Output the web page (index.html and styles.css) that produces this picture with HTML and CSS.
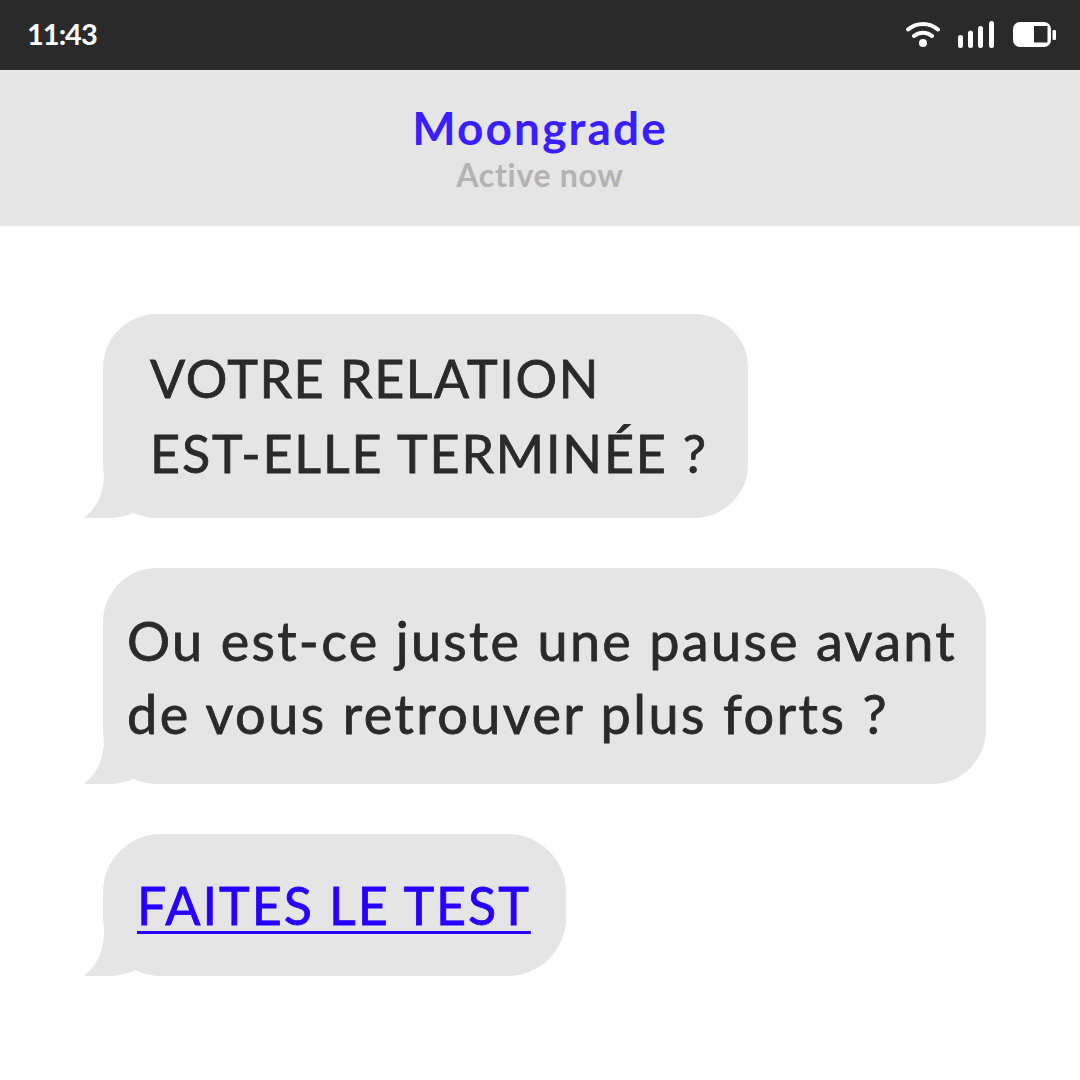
FILE: index.html
```html
<!DOCTYPE html>
<html lang="fr">
<head>
<meta charset="utf-8">
<title>Moongrade</title>
<link rel="stylesheet" href="styles.css">
</head>
<body>
<div class="status">
  <span class="time">11:43</span>
  <div class="icons">
    <svg class="wifi" width="34" height="26" viewBox="0 0 34 26"><path d="M2 8.500C10.500 1 23.500 1 32 8.500M8 15C13 10.500 21 10.500 26 15" fill="none" stroke="#fff" stroke-width="4" stroke-linecap="round"/><circle cx="17" cy="22" r="4" fill="#fff"/></svg>
    <svg class="signal" width="36" height="27" viewBox="0 0 36 27"><rect x="0" y="14" width="5" height="13" rx="2.500" fill="#fff"/><rect x="10" y="9.500" width="5" height="17.500" rx="2.500" fill="#fff"/><rect x="20" y="5" width="5" height="22" rx="2.500" fill="#fff"/><rect x="31" y="0" width="5" height="27" rx="2.500" fill="#fff"/></svg>
    <svg class="battery" width="43" height="25" viewBox="0 0 43 25"><rect x="0" y="0" width="38" height="25" rx="7" fill="#fff"/><rect x="21" y="4" width="13.500" height="16.500" fill="#2a2a2a"/><rect x="39.500" y="8" width="3.500" height="10" rx="1.200" fill="#fff"/></svg>
  </div>
</div>
<header class="head">
  <div class="name">Moongrade</div>
  <div class="active">Active now</div>
</header>
<main class="chat">
  <div class="bubble b1">
    <svg class="tail" width="60" height="60" viewBox="0 0 60 60"><path d="M21 0V12C21.500 35 14 50 .7 60H24C34 60 44 58 52 54V0Z" fill="#e5e5e5"/></svg>
    <span class="line l1">VOTRE RELATION</span>
    <span class="line l2">EST-ELLE TERMINÉE ?</span>
  </div>
  <div class="bubble b2">
    <svg class="tail" width="60" height="60" viewBox="0 0 60 60"><path d="M21 0V12C21.500 35 14 50 .7 60H24C34 60 44 58 52 54V0Z" fill="#e5e5e5"/></svg>
    <span class="line l3">Ou est-ce juste une pause avant</span>
    <span class="line l4">de vous retrouver plus forts ?</span>
  </div>
  <div class="bubble b3">
    <svg class="tail" width="60" height="60" viewBox="0 0 60 60"><path d="M21 0V12C21.500 35 14 50 .7 60H24C34 60 44 58 52 54V0Z" fill="#e5e5e5"/></svg>
    <a class="cta" href="#">FAITES LE TEST</a>
  </div>
</main>
</body>
</html>
```
FILE: styles.css
```css
html, body { margin: 0; padding: 0; background: #fff; }
body { width: 1080px; height: 1080px; overflow: hidden; font-family: "Lato", "Open Sans", sans-serif; }
.status { height: 70px; background: #2a2a2a; display: flex; align-items: center; justify-content: space-between; padding: 0 24px 0 27px; box-sizing: border-box; }
.time { color: #fff; font-size: 29px; font-weight: 700; line-height: 70px; letter-spacing: -1px; position: relative; top: -1px; }
.icons { display: flex; align-items: center; gap: 18px; position: relative; top: -1px; }
.battery { margin-left: 1px; }
.head { height: 156px; background: #e5e5e5; display: flex; flex-direction: column; align-items: center; box-sizing: border-box; padding-top: 30px; }
.name { color: #3a1eff; font-size: 46px; font-weight: 700; line-height: 56px; letter-spacing: 2.100px; }
.active { color: #b3b3b3; font-size: 32px; font-weight: 700; line-height: 38px; letter-spacing: 0.7px; }
.chat { display: flex; flex-direction: column; align-items: flex-start; gap: 50px; padding: 88px 0 0 103px; }
.bubble { position: relative; background: #e5e5e5; border-radius: 54px; box-sizing: border-box; color: #2a2a2a; font-size: 52px; line-height: 75px; -webkit-text-stroke: 0.8px currentColor; }
.tail { position: absolute; left: -20px; bottom: 0; }
.line { position: relative; display: block; white-space: nowrap; }
.l1 { letter-spacing: 1.550px; }
.l2 { letter-spacing: 1.850px; }
.l3 { font-size: 54px; letter-spacing: 2.300px; }
.l4 { font-size: 54px; letter-spacing: 2.430px; margin-top: -2px; }
.b1 { width: 645px; height: 204px; padding: 27px 0 0 47px; }
.b2 { width: 883px; height: 216px; padding: 35px 0 0 24px; }
.b3 { width: 463px; height: 142px; padding: 34px 0 0 34px; border-radius: 58px; }
.cta { position: relative; color: #2600ff; font-size: 52px; line-height: 75px; letter-spacing: 1.950px; text-decoration: underline; text-decoration-thickness: 3px; text-underline-offset: 6px; white-space: nowrap; }
```
